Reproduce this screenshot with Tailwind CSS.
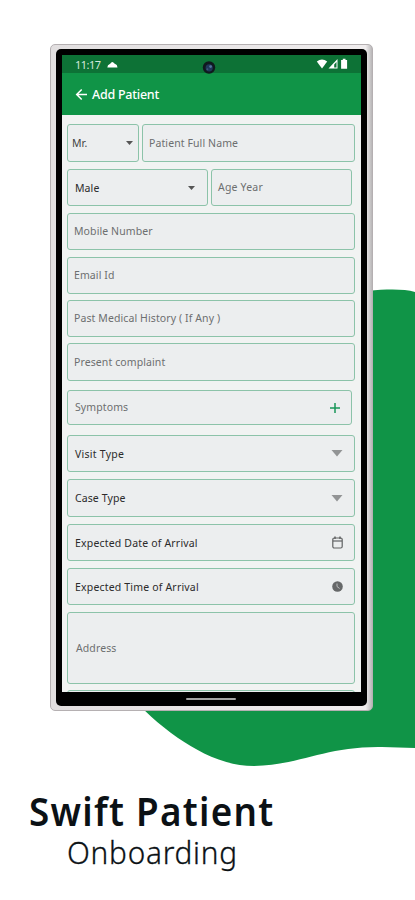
<!DOCTYPE html>
<html lang="en">
<head>
<meta charset="utf-8">
<meta name="viewport" content="width=device-width, initial-scale=1">
<title>Swift Patient Onboarding</title>
<script src="https://cdn.jsdelivr.net/npm/@tailwindcss/browser@4"></script>
</head>
<body class="bg-white">
<main class="relative w-[415px] h-[900px] overflow-hidden bg-white font-['Noto_Sans','Open_Sans',sans-serif]">
  <!-- Green wave -->
  <svg class="absolute inset-0" width="415" height="900" viewBox="0 0 415 900"><path d="M415 292C404 289 388 289 368 291L300 500L130 695C142 709 158 724 178 738C199 752 224 766 254 766C300 765 326 746 382 747L415 748Z" fill="#109447"/></svg>

  <!-- Phone -->
  <section class="relative ml-[50px] mt-[44px] w-[323px] h-[667px] rounded-[5px] border border-[#b5b0b2] bg-linear-to-r from-[#e2dfe0] from-0% via-[#f0edee] via-98% to-[#b9b7b8] pl-[5px] pt-[4px]">
    <div class="w-[311px] h-[657px] rounded-[5px] bg-black pl-[6px] pt-[6px]">
      <div class="flex flex-col w-[299px] h-[637px] overflow-hidden bg-[#f1f3f2]">
        <div class="relative flex shrink-0 items-center h-[18px] bg-[#0d7236] pl-[13px] pr-[13px] text-[#d5e8dc]">
          <span class="text-[11px] leading-none tracking-[-0.5px] w-[32px] whitespace-nowrap">11:17</span>
          <svg width="11" height="7" viewBox="0 0 11 7"><path d="M.3 6.5L1 4.2L3.2 2.8Q5.2-.8 7.4 2.4L9.8 4L10.5 6.5Z" fill="#fff"/></svg>
          <svg class="absolute left-[140px] top-[5px]" width="14" height="15" viewBox="0 0 14 15"><circle cx="7" cy="7.5" r="6.2" fill="#10191e"/><circle cx="7.2" cy="7.8" r="3.6" fill="#20375a"/><circle cx="8.6" cy="6.6" r="1.4" fill="#52759c"/><circle cx="5.4" cy="9.2" r="1" fill="#3d5877"/></svg>
          <svg class="ml-auto mr-[-1px]" width="33" height="12" viewBox="0 0 33 12"><path d="M.8 3.6Q6 -.8 11.2 3.6L6 10.6Z" fill="#fff"/><path d="M12.5 10.5L21.5 1V10.5Z" fill="#fff"/><path d="M18.2 6.4L20.5 4V9.5H18.2Z" fill="#0d7236"/><path d="M26.8 2V.8h2.7V2h1.6v8.8h-6V2Z" fill="#fff"/></svg>
        </div>
        <header class="flex shrink-0 items-center h-[42px] bg-[#109447] pl-[13px] text-white">
          <svg width="13" height="13" viewBox="0 0 13 13" fill="none" stroke="#fff" stroke-width="1.5"><path d="M12 6.5H2M6.7 1.5L1.7 6.5L6.7 11.5"/></svg>
          <h1 class="ml-[4px] mt-[3px] text-[12.5px] font-medium leading-none tracking-[-0.25px] whitespace-nowrap">Add Patient</h1>
        </header>

        <form class="flex flex-col pl-[5px] pt-[9px] text-[10.5px] leading-none tracking-[0.1px] text-[#6d6f70] whitespace-nowrap">
          <div class="flex gap-[3px]">
            <div class="flex items-center justify-between w-[72px] h-[38px] rounded-[3px] border border-[#8cc3a9] bg-[#eceeef] pl-[4px] pr-[5px] text-[#444]"><span>Mr.</span><svg width="7" height="4" viewBox="0 0 7 4"><path d="M0 0h7L3.5 4Z" fill="#555"/></svg></div>
            <div class="flex items-center w-[213px] h-[38px] rounded-[3px] border border-[#8cc3a9] bg-[#eceeef] pl-[6px]"><span>Patient Full Name</span></div>
          </div>
          <div class="mt-[7px] flex gap-[3px]">
            <div class="flex items-center justify-between w-[141px] h-[37px] rounded-[3px] border border-[#8cc3a9] bg-[#eceeef] pl-[7px] pr-[12px] text-[#2b2b2b]"><span class="mt-px">Male</span><svg width="7" height="4" viewBox="0 0 7 4"><path d="M0 0h7L3.5 4Z" fill="#555"/></svg></div>
            <div class="flex items-center w-[141px] h-[37px] rounded-[3px] border border-[#8cc3a9] bg-[#eceeef] pl-[6px]"><span class="tracking-[0.2px]">Age Year</span></div>
          </div>
          <div class="mt-[7px] flex items-center w-[288px] h-[37px] rounded-[3px] border border-[#8cc3a9] bg-[#eceeef] pl-[6px]"><span>Mobile Number</span></div>
          <div class="mt-[7px] flex items-center w-[288px] h-[37px] rounded-[3px] border border-[#8cc3a9] bg-[#eceeef] pl-[6px]"><span>Email Id</span></div>
          <div class="mt-[6px] flex items-center w-[288px] h-[37px] rounded-[3px] border border-[#8cc3a9] bg-[#eceeef] pl-[6px]"><span>Past Medical History ( If Any )</span></div>
          <div class="mt-[6px] flex items-center w-[288px] h-[38px] rounded-[3px] border border-[#8cc3a9] bg-[#eceeef] pl-[6px]"><span>Present complaint</span></div>
          <div class="mt-[9px] flex items-center justify-between w-[285px] h-[35px] rounded-[3px] border border-[#8cc3a9] bg-[#eceeef] pl-[7px] pr-[11px]"><span>Symptoms</span><svg width="10" height="10" viewBox="0 0 10 10" stroke="#18965a" stroke-width="1.5"><path d="M5 0V10M0 5H10"/></svg></div>
          <div class="mt-[10px] flex items-center justify-between w-[288px] h-[37px] rounded-[3px] border border-[#8cc3a9] bg-[#eceeef] pl-[7px] pr-[11px] text-[#2b2b2b]"><span class="mt-px tracking-[0.25px]">Visit Type</span><svg width="12" height="7" viewBox="0 0 12 7"><path d="M.5 0h11L6 6.5Z" fill="#929495"/></svg></div>
          <div class="mt-[7px] flex items-center justify-between w-[288px] h-[38px] rounded-[3px] border border-[#8cc3a9] bg-[#eceeef] pl-[7px] pr-[11px] text-[#2b2b2b]"><span>Case Type</span><svg width="12" height="7" viewBox="0 0 12 7"><path d="M.5 0h11L6 6.5Z" fill="#929495"/></svg></div>
          <div class="mt-[7px] flex items-center justify-between w-[288px] h-[37px] rounded-[3px] border border-[#8cc3a9] bg-[#eceeef] pl-[7px] pr-[11px] text-[#2b2b2b]"><span class="mt-px tracking-[0.18px]">Expected Date of Arrival</span><svg width="11" height="13" viewBox="0 0 11 13" fill="none" stroke="#606263" stroke-width="1.2"><rect x=".8" y="2" width="9.4" height="10" rx="1.5"/><path d="M1 5H10" /><path d="M3 .5V3M8 .5V3" stroke-width="1.5"/></svg></div>
          <div class="mt-[7px] flex items-center justify-between w-[288px] h-[37px] rounded-[3px] border border-[#8cc3a9] bg-[#eceeef] pl-[7px] pr-[11px] text-[#2b2b2b]"><span class="mt-px tracking-[0.18px]">Expected Time of Arrival</span><svg width="11" height="11" viewBox="0 0 11 11"><circle cx="5.5" cy="5.5" r="5.3" fill="#666869"/><path d="M5 2.5V5.5L7.6 7.5" fill="none" stroke="#c4c6c7" stroke-width=".9"/></svg></div>
          <div class="mt-[7px] flex items-center w-[288px] h-[72px] rounded-[3px] border border-[#8cc3a9] bg-[#eceeef] pl-[8px]"><span>Address</span></div>
          <div class="mt-[6px] w-[288px] h-[37px] rounded-[3px] border border-[#8cc3a9] bg-[#eceeef]"></div>
        </form>
      </div>
      <div class="mt-[6px] ml-[124px] h-[2px] w-[50px] rounded-full bg-[#a5a5a5]"></div>
    </div>
  </section>

  <div class="mt-[80px] text-[#0b1115] whitespace-nowrap">
    <h2 class="ml-[29px] h-[42px] w-max origin-left scale-x-[0.92] text-[40px] leading-[40px] font-semibold tracking-[1.4px]">Swift Patient</h2>
    <p class="ml-[67px] mt-[2px] h-[34px] w-max origin-left scale-x-[0.93] text-[32px] leading-[34px] font-light tracking-[0.8px] [-webkit-text-stroke:0.3px_#0b1115]">Onboarding</p>
  </div>
</main>
</body>
</html>
